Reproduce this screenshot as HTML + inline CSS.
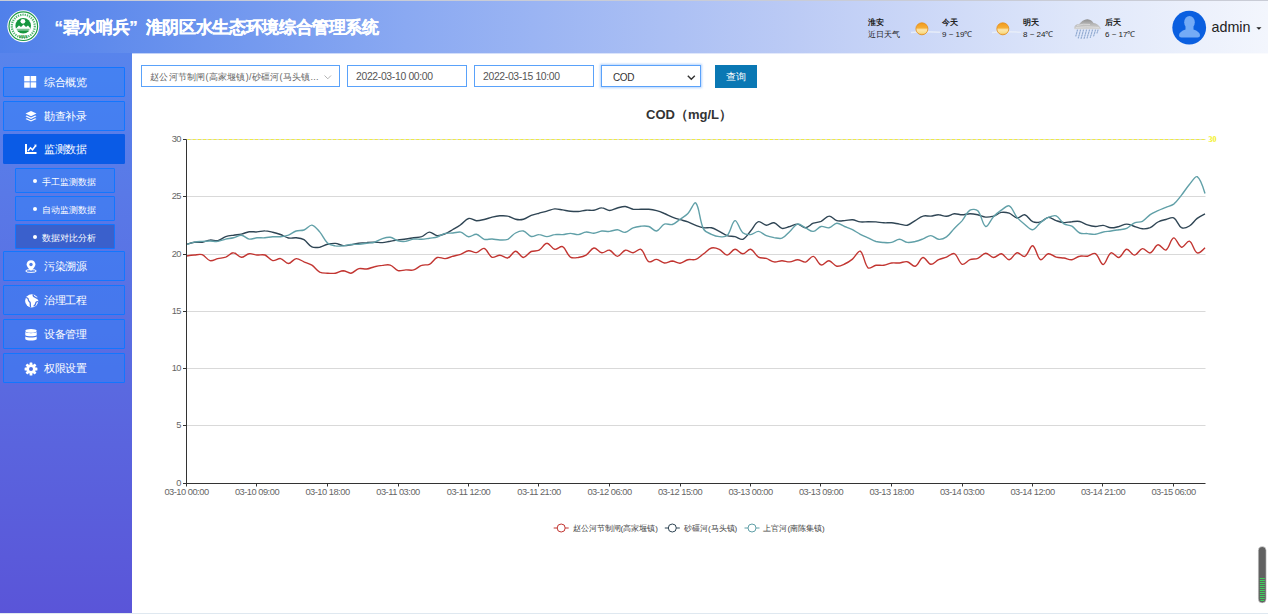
<!DOCTYPE html>
<html><head><meta charset="utf-8">
<style>
*{margin:0;padding:0;box-sizing:border-box}
html,body{width:1268px;height:614px;overflow:hidden;background:#fff;font-family:"Liberation Sans",sans-serif}
#hdr{position:absolute;left:0;top:0;width:1268px;height:54px;background:linear-gradient(90deg,#5080ea 0%,#8aa9f2 32%,#bccbf5 63%,#dfe7fa 85%,#f3f6fd 100%)}
#hdr .topline{position:absolute;left:0;top:0;width:1268px;height:1px;background:#c9ccd6}
#title{position:absolute;left:46px;top:16.5px;color:#fff;font-size:17px;letter-spacing:-0.36px;font-weight:bold;white-space:nowrap;line-height:22px;-webkit-text-stroke:0.25px #fff}
#title b{display:inline-block;width:16.64px;font-weight:bold}
#side{position:absolute;left:0;top:53px;width:132px;height:560px;background:linear-gradient(180deg,#5884ec 0%,#5a6ee2 50%,#5a55d8 100%)}
.mi{position:absolute;left:3px;width:122px;height:30px;border:1px solid #1276ff;border-radius:1px;background:rgba(50,128,248,0.5);color:#fff;font-size:11px}
.mi.act{background:#0a5be6;border-color:#0a5be6}
.mi span{position:absolute;left:40px;top:8px;white-space:nowrap;line-height:12px;letter-spacing:-0.3px}
.mi svg{position:absolute;left:20px;top:8px}
.si{position:absolute;left:15px;width:100px;height:25px;border:1px solid #1276ff;border-radius:1px;background:rgba(50,128,248,0.5);color:#fff;font-size:9.2px}
.si.act{background:#3a60cc}
.si i{position:absolute;left:17px;top:9.5px;width:4px;height:4px;border-radius:50%;background:#fff}
.si span{position:absolute;left:26px;top:7.5px;white-space:nowrap;line-height:10px}
#bline{position:absolute;left:0;top:613px;width:1268px;height:1px;background:#dfe8f0}
.inp{position:absolute;top:65px;height:22px;border:1px solid #5aa2fa;background:#fff;font-size:10.4px;letter-spacing:-0.33px;color:#555;white-space:nowrap;overflow:hidden}
.inp span{position:absolute;left:8px;top:4.5px;line-height:12px}
#btn{position:absolute;left:715px;top:65px;width:42px;height:23px;background:#0a78b4;color:#fff;font-size:9.5px;text-align:center;line-height:23px}
.wt{position:absolute;font-size:8px;color:#222;white-space:nowrap;line-height:10px}
#chart{position:absolute;left:0;top:0}
.ax{font-size:9.3px;letter-spacing:-0.5px;fill:#666;font-family:"Liberation Sans",sans-serif}
</style></head><body>
<div id="hdr"><div class="topline"></div>
<svg style="position:absolute;left:0;top:0" width="60" height="53">
<circle cx="23.3" cy="26.2" r="16" fill="#fff"/>
<circle cx="23.3" cy="26.2" r="14.3" fill="none" stroke="#1e9a45" stroke-width="1.2"/>
<circle cx="23.3" cy="26.2" r="11.5" fill="none" stroke="#4fb56e" stroke-width="2.2" stroke-dasharray="1.3,1"/>
<circle cx="23.2" cy="25.8" r="7.8" fill="#17963f"/>
<circle cx="22.9" cy="21.3" r="2.4" fill="#fff"/>
<path d="M16 28.5 L19 25.5 L21 27 L23.5 24.5 L26 27 L28 25.5 L30.5 28.5 L30 30.5 L16.5 30.5Z" fill="#fff"/>
<path d="M17 29.3 H29.5 M18.5 31 H28" stroke="#17963f" stroke-width="0.7"/>
<text x="23.3" y="38" font-size="4" fill="#1e9a45" text-anchor="middle" font-weight="bold">MEE</text>
</svg>
<div id="title"><b style="text-align:right">“</b>碧水哨兵<b style="text-align:left">”</b>淮阴区水生态环境综合管理系统</div>
<svg style="position:absolute;left:900px;top:10px" width="220" height="34">
<defs>
<linearGradient id="sun" x1="0" y1="0" x2="0" y2="1"><stop offset="0" stop-color="#f29a1c"/><stop offset="0.42" stop-color="#f6ae36"/><stop offset="0.58" stop-color="#fbe6ad"/><stop offset="0.85" stop-color="#f9dc88"/><stop offset="1" stop-color="#f2ad3c"/></linearGradient>
<linearGradient id="cl" x1="0" y1="0" x2="0" y2="1"><stop offset="0" stop-color="#8e8e8e"/><stop offset="0.5" stop-color="#b8b8b8"/><stop offset="1" stop-color="#d6d6d6"/></linearGradient>
</defs>
<path d="M11 22.5 Q25 21 40 22.3" stroke="#e9eef8" stroke-width="1.6" fill="none" opacity="0.9"/>
<circle cx="21.9" cy="18.8" r="6" fill="url(#sun)" stroke="#e38d18" stroke-width="0.8"/>
<path d="M92 22.5 Q106 21 121 22.3" stroke="#e9eef8" stroke-width="1.6" fill="none" opacity="0.9"/>
<circle cx="102.8" cy="18.8" r="6" fill="url(#sun)" stroke="#e38d18" stroke-width="0.8"/>
<path d="M174.3 19 C173.8 16.2 175.8 14.2 179 14.3 C181 11.5 184.5 9 187.5 9.2 C190.5 9.3 192.5 11.5 193.5 13 C196.5 13.2 199.5 15.5 201 18.6 L200.3 19.3 L174.8 19.3Z" fill="url(#cl)"/>
<path d="M177 15.5 Q183 13.5 190 14.5 M176 17.5 Q186 16 199 17.5" stroke="#e6e6e6" stroke-width="0.8" fill="none" opacity="0.8"/>
<g stroke="#86a2cc" stroke-width="1.2" stroke-linecap="round" stroke-dasharray="1.2,1.3" opacity="0.85">
<path d="M177.5 20 l-2 7 M180.5 20 l-2.2 8 M183.5 20 l-2.4 8.5 M186.5 20 l-2.4 8.5 M189.5 20 l-2.4 8 M192.5 20 l-2.2 7.5 M195.5 20 l-2 6.5 M198 20 l-1 3"/>
</g>
</svg>
<div class="wt" style="left:868px;top:17.5px;font-weight:bold">淮安</div>
<div class="wt" style="left:868px;top:29.5px">近日天气</div>
<div class="wt" style="left:942px;top:17.5px;font-weight:bold">今天</div>
<div class="wt" style="left:942px;top:29.5px">9 ~ 19℃</div>
<div class="wt" style="left:1023px;top:17.5px;font-weight:bold">明天</div>
<div class="wt" style="left:1023px;top:29.5px">8 ~ 24℃</div>
<div class="wt" style="left:1105px;top:17.5px;font-weight:bold">后天</div>
<div class="wt" style="left:1105px;top:29.5px">6 ~ 17℃</div>
<svg style="position:absolute;left:1168px;top:6px" width="100" height="44">
<circle cx="21.2" cy="21.6" r="16.9" fill="#0a5fe0"/>
<ellipse cx="21.5" cy="16.3" rx="5.3" ry="6.4" fill="#74abf6"/>
<path d="M17.5 20.5 L17.5 23.5 Q11.5 25.5 11 29 Q11 31.5 13.5 31.5 L29.5 31.5 Q32 31.5 32 29 Q31.5 25.5 25.5 23.5 L25.5 20.5Z" fill="#74abf6"/>
<path d="M88.3 21.3 L93.5 21.3 L90.9 23.8Z" fill="#222"/>
</svg>
<div style="position:absolute;left:1211.5px;top:18.5px;font-size:14.3px;color:#222;line-height:17px">admin</div>
</div>
<div id="side">
</div>
<div class="mi" style="top:67px"><svg width="13" height="13" viewBox="0 0 13 13" style="left:20px;top:8px"><rect x="0.2" y="0" width="5.6" height="5.4" fill="#fff"/><rect x="6.6" y="0" width="5.6" height="5.4" fill="#fff"/><rect x="0.2" y="6.3" width="5.6" height="5.4" fill="#fff"/><rect x="6.6" y="6.3" width="5.6" height="5.4" fill="#fff"/></svg><span>综合概览</span></div>
<div class="mi" style="top:101px"><svg width="13" height="13" viewBox="0 0 13 13" style="left:20.5px;top:8.5px"><path d="M6 0 L11.5 2.6 L6 5.2 L0.5 2.6Z" fill="#fff"/><path d="M1.8 4.6 L6 6.6 L10.2 4.6 L11.5 5.3 L6 7.9 L0.5 5.3Z" fill="#fff"/><path d="M1.8 7.3 L6 9.3 L10.2 7.3 L11.5 8 L6 10.6 L0.5 8Z" fill="#fff"/></svg><span>勘查补录</span></div>
<div class="mi act" style="top:134px"><svg width="13" height="13" viewBox="0 0 13 13" style="left:20.5px;top:9px"><path d="M1 0 V9 H11.5" stroke="#fff" stroke-width="2" fill="none"/><path d="M3 7 L5.5 3.8 L7.5 5.8 L10.8 1.5" stroke="#fff" stroke-width="1.5" fill="none"/><path d="M9 0.8 L11.5 0.5 L11.2 3Z" fill="#fff"/></svg><span>监测数据</span></div>
<div class="si" style="top:168px"><i></i><span>手工监测数据</span></div>
<div class="si" style="top:196px"><i></i><span>自动监测数据</span></div>
<div class="si act" style="top:224px"><i></i><span>数据对比分析</span></div>
<div class="mi" style="top:251px"><svg width="13" height="14" viewBox="0 0 13 14" style="left:20.5px;top:8px"><path d="M6 0.3 C3.2 0.3 1.6 2.3 1.6 4.6 C1.6 7.2 6 11 6 11 C6 11 10.4 7.2 10.4 4.6 C10.4 2.3 8.8 0.3 6 0.3Z" fill="#fff"/><circle cx="6" cy="4.5" r="1.7" fill="#4f7ee9"/><ellipse cx="6" cy="11" rx="5.3" ry="1.4" fill="none" stroke="#fff" stroke-width="1"/></svg><span>污染溯源</span></div>
<div class="mi" style="top:285px"><svg width="14" height="14" viewBox="0 0 14 14" style="left:20.5px;top:7.5px"><circle cx="6.7" cy="6.8" r="6.6" fill="#fff"/><path d="M1.2 3.4 C2.6 4 3.6 4.6 3.4 5.8 C3.2 7 4.8 7.6 5.2 8.8 C5.5 10 5 11.5 5.6 12.9 M8.2 0.5 C8 1.8 8.8 2.8 10 3.2 C11.2 3.6 12.4 3.9 12.9 5.2 M12.9 7.6 C11.6 7.4 10.8 8.2 10.7 9.4 C10.6 10.6 9.8 11.6 8.6 12.3" stroke="#4a74e6" stroke-width="1.3" fill="none"/></svg><span>治理工程</span></div>
<div class="mi" style="top:319px"><svg width="13" height="13" viewBox="0 0 13 13" style="left:20.5px;top:8.5px"><ellipse cx="6" cy="1.9" rx="5.7" ry="1.9" fill="#fff"/><path d="M0.3 3.1 C1.5 4.6 10.5 4.6 11.7 3.1 V6.2 C10.5 7.7 1.5 7.7 0.3 6.2Z" fill="#fff"/><path d="M0.3 7.4 C1.5 8.9 10.5 8.9 11.7 7.4 V10.2 C10.5 12 1.5 12 0.3 10.2Z" fill="#fff"/></svg><span>设备管理</span></div>
<div class="mi" style="top:352.5px"><svg width="14" height="14" viewBox="-7 -7 14 14" style="left:20px;top:8px"><g fill="#fff"><circle r="4.6"/><rect x="-1.4" y="-6.4" width="2.8" height="3" rx="0.5" transform="rotate(0)"/><rect x="-1.4" y="-6.4" width="2.8" height="3" rx="0.5" transform="rotate(45)"/><rect x="-1.4" y="-6.4" width="2.8" height="3" rx="0.5" transform="rotate(90)"/><rect x="-1.4" y="-6.4" width="2.8" height="3" rx="0.5" transform="rotate(135)"/><rect x="-1.4" y="-6.4" width="2.8" height="3" rx="0.5" transform="rotate(180)"/><rect x="-1.4" y="-6.4" width="2.8" height="3" rx="0.5" transform="rotate(225)"/><rect x="-1.4" y="-6.4" width="2.8" height="3" rx="0.5" transform="rotate(270)"/><rect x="-1.4" y="-6.4" width="2.8" height="3" rx="0.5" transform="rotate(315)"/></g><circle r="2" fill="#4f72e4"/></svg><span>权限设置</span></div>
<div id="bline"></div>
<div style="position:absolute;left:132px;top:53px;width:1136px;height:1px;background:rgba(255,255,255,0.6)"></div>

<div class="inp" style="left:141px;width:199px"><span style="font-size:9px;letter-spacing:0.25px;color:#666">赵公河节制闸(高家堰镇)/砂礓河(马头镇...</span><svg style="position:absolute;left:182px;top:8.5px" width="8" height="5"><path d="M0.5 0.5 L3.8 3.8 L7 0.5" stroke="#aaa" stroke-width="0.9" fill="none"/></svg></div>
<div class="inp" style="left:347px;width:120px"><span>2022-03-10 00:00</span></div>
<div class="inp" style="left:474px;width:120px"><span>2022-03-15 10:00</span></div>
<div class="inp" style="left:601px;width:100px;box-shadow:0 0 2px 1px rgba(90,160,250,0.45)"><span style="left:11px;top:5.5px;font-size:10px;letter-spacing:-0.4px;color:#333">COD</span><svg style="position:absolute;left:85px;top:8.5px" width="9" height="6"><path d="M0.8 0.8 L4.3 4.3 L7.8 0.8" stroke="#333" stroke-width="1.4" fill="none"/></svg></div>
<div id="btn">查询</div>

<svg id="chart" width="1268" height="614">
<line x1="186.5" y1="425.5" x2="1205.5" y2="425.5" stroke="#d9d9d9" stroke-width="1"/>
<line x1="186.5" y1="368.5" x2="1205.5" y2="368.5" stroke="#d9d9d9" stroke-width="1"/>
<line x1="186.5" y1="311.5" x2="1205.5" y2="311.5" stroke="#d9d9d9" stroke-width="1"/>
<line x1="186.5" y1="254.5" x2="1205.5" y2="254.5" stroke="#d9d9d9" stroke-width="1"/>
<line x1="186.5" y1="196.5" x2="1205.5" y2="196.5" stroke="#d9d9d9" stroke-width="1"/>
<line x1="186.5" y1="139.5" x2="1205.5" y2="139.5" stroke="#d9d9d9" stroke-width="1"/>
<line x1="187.5" y1="139.5" x2="1205.5" y2="139.5" stroke="#eeeb40" stroke-width="1" stroke-dasharray="3,2.2"/>
<text x="1208.5" y="142" font-size="8" font-weight="bold" fill="#f3f020" font-family="Liberation Serif">30</text>
<path d="M186.5 256.0 C186.5 256.0 191.6 255.2 194.3 255.0 C197.1 254.8 199.7 253.9 202.2 254.7 C205.2 255.8 207.0 259.8 210.0 260.6 C212.5 261.2 215.1 259.3 217.8 258.6 C220.6 258.0 223.1 258.0 225.7 257.1 C228.6 256.0 230.8 252.7 233.5 252.8 C236.3 252.8 238.5 257.2 241.3 257.3 C244.0 257.5 246.3 254.1 249.2 253.7 C251.8 253.3 254.3 254.8 257.0 255.0 C259.7 255.2 262.4 254.1 264.9 255.0 C267.9 256.1 269.7 259.9 272.7 260.6 C275.2 261.2 278.0 258.2 280.5 258.6 C283.4 259.2 285.6 263.5 288.4 263.5 C291.1 263.5 293.3 258.9 296.2 258.6 C298.8 258.4 301.3 260.7 304.0 261.9 C306.8 263.0 309.4 263.6 311.9 265.1 C314.9 267.1 316.6 270.4 319.7 272.1 C322.1 273.3 324.8 273.0 327.5 273.2 C330.3 273.4 332.7 273.6 335.4 273.2 C338.2 272.8 340.5 270.8 343.2 270.7 C345.9 270.7 348.4 273.5 351.0 273.2 C353.9 272.8 355.9 269.4 358.9 268.6 C361.4 267.9 364.0 269.3 366.7 269.0 C369.5 268.7 371.8 267.3 374.5 266.7 C377.2 266.0 379.6 265.6 382.4 265.4 C385.1 265.1 387.7 264.3 390.2 265.1 C393.2 266.1 395.0 269.6 398.0 270.6 C400.5 271.3 403.1 270.0 405.9 269.9 C408.6 269.8 411.2 270.7 413.7 269.9 C416.7 269.1 418.6 266.4 421.6 265.4 C424.1 264.4 427.0 265.5 429.4 264.3 C432.5 262.8 434.1 258.7 437.2 257.5 C439.6 256.7 442.4 258.8 445.1 258.6 C447.8 258.4 450.1 257.0 452.9 256.2 C455.6 255.5 458.1 255.2 460.7 254.3 C463.6 253.3 465.7 251.1 468.6 250.8 C471.2 250.5 473.8 253.0 476.4 252.6 C479.3 252.2 481.9 247.7 484.2 248.4 C487.4 249.4 488.8 255.9 492.1 257.3 C494.3 258.2 497.2 255.1 499.9 255.2 C502.7 255.3 505.3 258.6 507.7 258.0 C510.8 257.2 512.8 251.3 515.6 251.2 C518.3 251.1 520.6 257.4 523.4 257.5 C526.1 257.5 528.2 252.9 531.2 251.5 C533.7 250.4 536.7 251.5 539.1 250.2 C542.2 248.5 544.1 243.3 546.9 243.2 C549.6 243.0 551.7 248.6 554.7 249.3 C557.2 249.8 560.5 245.6 562.6 246.7 C565.9 248.4 567.0 254.7 570.4 257.1 C572.5 258.5 575.6 257.8 578.2 257.5 C581.0 257.1 583.7 256.6 586.1 255.1 C589.2 253.3 591.0 248.4 593.9 248.0 C596.5 247.6 598.9 252.4 601.8 252.8 C604.3 253.2 607.1 249.6 609.6 250.2 C612.6 250.9 614.7 256.4 617.4 256.4 C620.2 256.4 622.3 250.9 625.3 250.2 C627.7 249.6 630.4 253.0 633.1 252.8 C635.9 252.6 638.9 248.1 640.9 249.3 C644.4 251.2 645.2 259.4 648.8 261.7 C650.7 262.9 653.9 259.2 656.6 259.4 C659.4 259.7 661.6 262.7 664.4 263.0 C667.1 263.2 669.5 261.0 672.3 261.0 C675.0 261.1 677.4 263.4 680.1 263.2 C682.9 263.0 685.1 260.4 687.9 259.7 C690.6 259.1 693.3 260.4 695.8 259.4 C698.8 258.3 700.9 255.8 703.6 253.8 C706.4 251.8 708.4 248.9 711.4 248.0 C713.9 247.3 716.8 248.2 719.3 249.3 C722.3 250.7 724.4 255.1 727.1 255.1 C729.9 255.1 732.1 249.5 735.0 249.3 C737.6 249.1 740.0 253.8 742.8 253.8 C745.5 253.8 748.2 248.8 750.6 249.3 C753.6 249.9 755.3 255.2 758.5 257.1 C760.7 258.4 763.7 257.6 766.3 258.4 C769.1 259.3 771.3 261.5 774.1 261.9 C776.8 262.3 779.2 260.7 782.0 260.7 C784.7 260.7 787.1 262.1 789.8 261.9 C792.6 261.7 794.9 259.7 797.6 259.7 C800.4 259.7 802.9 262.6 805.5 262.1 C808.4 261.4 810.8 256.0 813.3 256.4 C816.3 257.0 818.0 264.1 821.1 264.9 C823.5 265.6 826.3 260.5 829.0 260.7 C831.8 261.0 833.8 265.6 836.8 266.2 C839.3 266.7 842.1 265.2 844.6 264.0 C847.6 262.7 850.0 261.1 852.5 259.1 C855.5 256.6 858.3 250.1 860.3 251.2 C863.7 253.2 864.4 264.5 868.1 267.9 C869.8 269.4 873.2 265.8 876.0 265.3 C878.7 264.9 881.1 265.7 883.8 265.3 C886.6 264.9 888.8 263.4 891.6 263.0 C894.3 262.6 896.8 263.2 899.5 263.0 C902.2 262.7 904.8 261.1 907.3 261.7 C910.2 262.3 912.8 266.9 915.2 266.2 C918.2 265.4 920.1 257.9 923.0 257.5 C925.6 257.2 927.9 263.9 930.8 264.3 C933.4 264.6 935.8 261.0 938.7 259.7 C941.3 258.5 943.8 258.2 946.5 257.1 C949.3 256.0 952.2 252.6 954.3 253.6 C957.7 255.1 958.9 263.0 962.2 264.3 C964.4 265.1 967.1 260.8 970.0 259.7 C972.6 258.7 975.3 259.4 977.8 258.4 C980.8 257.2 982.9 253.4 985.7 253.2 C988.3 253.0 990.7 257.4 993.5 257.5 C996.2 257.6 998.8 253.5 1001.3 253.8 C1004.3 254.3 1006.5 259.9 1009.2 259.7 C1012.0 259.5 1014.0 253.4 1017.0 252.8 C1019.5 252.3 1022.7 257.4 1024.8 256.4 C1028.2 255.0 1030.2 245.2 1032.7 245.8 C1035.7 246.4 1037.1 258.0 1040.5 259.7 C1042.6 260.8 1045.4 254.3 1048.3 253.8 C1050.9 253.4 1053.3 256.3 1056.2 257.1 C1058.8 257.8 1061.3 257.6 1064.0 258.0 C1066.8 258.5 1069.2 260.0 1071.9 259.7 C1074.7 259.4 1076.8 256.8 1079.7 256.2 C1082.3 255.6 1084.9 256.6 1087.5 256.2 C1090.3 255.7 1093.3 252.5 1095.4 253.6 C1098.8 255.4 1100.5 264.7 1103.2 264.5 C1106.0 264.4 1107.7 254.3 1111.0 252.8 C1113.2 251.8 1116.4 258.0 1118.9 257.5 C1121.9 256.8 1123.8 249.7 1126.7 249.3 C1129.2 248.9 1131.8 255.3 1134.5 255.1 C1137.3 255.0 1139.4 249.1 1142.4 248.6 C1144.9 248.3 1147.8 253.5 1150.2 252.9 C1153.3 252.1 1155.0 245.3 1158.0 244.8 C1160.5 244.3 1163.7 250.9 1165.9 250.0 C1169.2 248.5 1170.7 238.4 1173.7 237.9 C1176.2 237.5 1178.5 246.6 1181.5 247.2 C1184.0 247.7 1187.1 240.4 1189.4 241.2 C1192.6 242.3 1193.9 251.5 1197.2 252.9 C1199.4 253.8 1205.0 247.7 1205.0 247.7" fill="none" stroke="#c23531" stroke-width="1.4" stroke-linejoin="round"/>
<path d="M186.5 244.3 C186.5 244.3 191.6 242.7 194.3 242.3 C197.0 242.0 199.5 242.7 202.2 242.3 C205.0 242.0 207.2 240.4 210.0 240.1 C212.7 239.8 215.2 241.2 217.8 240.7 C220.7 240.0 222.8 237.7 225.7 236.7 C228.3 235.8 230.8 235.6 233.5 235.2 C236.2 234.7 238.6 234.7 241.3 234.1 C244.1 233.5 246.4 232.2 249.2 231.8 C251.9 231.4 254.3 232.1 257.0 231.9 C259.8 231.8 262.1 230.8 264.9 230.9 C267.6 230.9 270.0 231.6 272.7 232.2 C275.5 232.8 277.8 233.5 280.5 234.5 C283.3 235.6 285.5 237.4 288.4 238.0 C291.0 238.6 293.5 237.5 296.2 237.8 C299.0 238.1 301.7 238.4 304.0 239.7 C307.1 241.6 308.7 245.4 311.9 246.9 C314.2 248.0 317.0 247.6 319.7 247.2 C322.5 246.7 324.7 245.0 327.5 244.3 C330.2 243.7 332.7 243.2 335.4 243.4 C338.2 243.6 340.4 245.3 343.2 245.6 C345.9 245.9 348.3 245.3 351.0 244.9 C353.8 244.5 356.1 243.6 358.9 243.2 C361.6 242.8 364.0 242.7 366.7 242.6 C369.4 242.4 371.8 242.2 374.5 242.2 C377.3 242.2 379.6 242.7 382.4 242.6 C385.1 242.4 387.5 241.7 390.2 241.3 C393.0 240.8 395.3 240.3 398.0 240.0 C400.8 239.6 403.1 239.4 405.9 239.0 C408.6 238.7 411.0 238.1 413.7 237.7 C416.5 237.3 419.0 237.6 421.6 236.7 C424.5 235.6 426.6 232.3 429.4 232.1 C432.1 232.0 434.4 235.3 437.2 235.7 C439.9 235.9 442.5 234.8 445.1 233.8 C447.9 232.7 450.2 231.1 452.9 229.5 C455.7 227.9 458.1 226.6 460.7 224.7 C463.6 222.7 465.5 219.2 468.6 218.5 C471.0 217.8 473.6 220.5 476.4 220.7 C479.1 220.8 481.5 220.1 484.2 219.5 C487.0 218.9 489.3 217.8 492.1 217.1 C494.8 216.5 497.1 216.0 499.9 215.8 C502.6 215.7 505.1 215.5 507.7 216.1 C510.6 216.7 512.7 218.7 515.6 219.3 C518.2 219.9 520.8 220.0 523.4 219.3 C526.3 218.6 528.4 216.5 531.2 215.4 C533.9 214.4 536.3 213.9 539.1 213.2 C541.8 212.4 544.2 211.9 546.9 211.1 C549.7 210.4 552.0 209.1 554.7 208.9 C557.4 208.7 559.8 209.5 562.6 209.9 C565.3 210.3 567.7 211.0 570.4 211.2 C573.1 211.5 575.5 211.7 578.2 211.5 C581.0 211.3 583.3 210.4 586.1 210.2 C588.8 210.0 591.2 210.6 593.9 210.2 C596.7 209.8 599.0 207.8 601.8 207.9 C604.5 207.9 606.8 210.4 609.6 210.5 C612.3 210.5 614.6 208.7 617.4 208.0 C620.1 207.3 622.6 206.3 625.3 206.5 C628.1 206.8 630.3 208.7 633.1 209.2 C635.8 209.6 638.2 209.3 640.9 209.3 C643.7 209.3 646.0 209.1 648.8 209.3 C651.5 209.5 653.9 209.9 656.6 210.6 C659.4 211.3 661.7 212.3 664.4 213.5 C667.2 214.6 669.5 216.0 672.3 217.1 C674.9 218.2 677.3 218.9 680.1 219.7 C682.8 220.5 685.3 220.9 687.9 221.9 C690.8 223.0 693.0 224.4 695.8 225.4 C698.5 226.4 700.8 227.4 703.6 227.8 C706.3 228.2 708.8 227.2 711.4 227.8 C714.3 228.5 716.6 230.1 719.3 231.4 C722.1 232.8 724.2 234.6 727.1 235.6 C729.7 236.5 732.3 236.0 735.0 236.6 C737.8 237.3 740.5 240.1 742.8 239.3 C746.0 238.1 748.0 234.0 750.6 231.0 C753.5 227.8 755.2 222.9 758.5 221.7 C760.7 220.8 763.5 225.0 766.3 225.2 C769.0 225.4 771.6 222.3 774.1 222.8 C777.1 223.5 779.0 227.7 782.0 228.4 C784.5 229.0 787.1 227.2 789.8 226.5 C792.6 225.7 795.0 223.9 797.6 224.1 C800.4 224.4 802.8 227.9 805.5 227.8 C808.3 227.6 810.4 224.4 813.3 223.2 C815.9 222.2 818.6 222.4 821.1 221.3 C824.1 219.9 826.2 216.2 829.0 216.1 C831.7 215.9 833.9 219.8 836.8 220.6 C839.3 221.4 841.9 220.8 844.6 220.6 C847.4 220.5 849.8 219.5 852.5 219.7 C855.3 219.9 857.5 221.6 860.3 221.9 C863.0 222.3 865.4 221.7 868.1 221.7 C870.9 221.7 873.2 221.7 876.0 221.9 C878.7 222.1 881.1 222.7 883.8 222.8 C886.5 223.0 888.9 222.6 891.6 222.8 C894.4 223.1 896.7 223.7 899.5 224.1 C902.2 224.5 904.8 225.8 907.3 225.2 C910.2 224.5 912.4 222.2 915.2 220.6 C917.9 219.0 920.0 216.9 923.0 216.1 C925.5 215.3 928.1 216.3 930.8 216.1 C933.6 215.8 935.9 214.7 938.7 214.8 C941.4 214.8 943.8 216.5 946.5 216.3 C949.3 216.2 951.5 214.1 954.3 213.8 C957.0 213.6 959.4 214.8 962.2 214.8 C964.9 214.7 967.3 213.7 970.0 213.7 C972.7 213.7 975.1 214.2 977.8 214.8 C980.6 215.4 982.9 216.9 985.7 217.1 C988.4 217.3 990.9 216.8 993.5 216.1 C996.4 215.2 998.5 212.9 1001.3 212.4 C1004.0 211.9 1006.6 212.3 1009.2 213.2 C1012.1 214.2 1014.2 217.7 1017.0 218.0 C1019.6 218.3 1022.4 214.2 1024.8 214.8 C1027.9 215.5 1029.5 220.2 1032.7 221.7 C1035.0 222.7 1038.0 222.6 1040.5 221.9 C1043.5 221.1 1045.5 217.6 1048.3 217.4 C1051.0 217.1 1053.4 219.7 1056.2 220.6 C1058.9 221.5 1061.2 222.4 1064.0 222.6 C1066.7 222.8 1069.1 221.8 1071.9 221.7 C1074.6 221.5 1077.1 221.0 1079.7 221.5 C1082.5 222.1 1084.7 224.0 1087.5 224.9 C1090.2 225.8 1092.6 226.4 1095.4 226.5 C1098.1 226.6 1100.5 225.2 1103.2 225.4 C1106.0 225.7 1108.2 227.6 1111.0 227.8 C1113.7 228.0 1116.2 227.1 1118.9 226.5 C1121.6 225.8 1124.0 224.1 1126.7 224.1 C1129.4 224.1 1131.8 225.7 1134.5 226.5 C1137.3 227.3 1139.6 228.6 1142.4 228.8 C1145.1 229.0 1147.7 228.7 1150.2 227.7 C1153.2 226.3 1155.1 223.5 1158.0 222.0 C1160.6 220.7 1163.1 220.2 1165.9 219.5 C1168.6 218.8 1171.6 216.8 1173.7 217.9 C1177.1 219.6 1178.2 225.9 1181.5 227.7 C1183.7 228.8 1187.1 227.4 1189.4 226.0 C1192.5 224.2 1194.2 220.7 1197.2 218.4 C1199.7 216.5 1205.0 213.8 1205.0 213.8" fill="none" stroke="#2f4554" stroke-width="1.4" stroke-linejoin="round"/>
<path d="M186.5 244.6 C186.5 244.6 191.5 242.6 194.3 242.1 C197.0 241.5 199.4 241.6 202.2 241.4 C204.9 241.3 207.3 241.0 210.0 241.0 C212.7 241.0 215.2 241.8 217.8 241.4 C220.6 241.1 222.9 239.7 225.7 239.1 C228.4 238.5 230.8 238.5 233.5 237.8 C236.3 237.1 238.7 235.0 241.3 235.2 C244.2 235.4 246.3 238.6 249.2 239.1 C251.8 239.5 254.3 238.0 257.0 237.8 C259.7 237.6 262.1 238.0 264.9 237.8 C267.6 237.6 269.9 236.9 272.7 236.7 C275.4 236.6 277.8 237.0 280.5 236.7 C283.3 236.5 285.8 236.1 288.4 235.2 C291.2 234.1 293.3 232.0 296.2 231.0 C298.8 230.2 301.5 230.9 304.0 230.0 C307.0 228.9 309.3 224.8 311.9 225.1 C314.8 225.5 317.3 229.2 319.7 231.9 C322.8 235.5 324.1 240.0 327.5 243.0 C329.6 244.9 332.5 245.3 335.4 245.9 C338.0 246.3 340.5 246.1 343.2 245.9 C346.0 245.6 348.3 244.8 351.0 244.5 C353.8 244.2 356.1 244.5 358.9 244.3 C361.6 244.0 364.0 243.6 366.7 243.2 C369.4 242.8 371.9 242.9 374.5 242.2 C377.4 241.3 379.5 239.5 382.4 238.6 C385.0 237.8 387.6 237.0 390.2 237.3 C393.1 237.7 395.2 240.1 398.0 240.9 C400.7 241.5 403.2 241.6 405.9 241.3 C408.7 240.9 410.9 239.4 413.7 239.0 C416.4 238.7 418.8 239.4 421.6 239.3 C424.3 239.2 426.6 238.7 429.4 238.3 C432.1 237.8 434.6 237.8 437.2 237.0 C440.1 236.1 442.2 234.2 445.1 233.4 C447.7 232.8 450.2 233.3 452.9 233.0 C455.6 232.8 458.2 231.5 460.7 232.1 C463.7 232.8 465.7 236.3 468.6 236.7 C471.2 237.1 473.8 233.9 476.4 234.3 C479.3 234.8 481.3 238.4 484.2 239.3 C486.7 240.1 489.3 238.9 492.1 239.0 C494.8 239.2 497.2 239.9 499.9 240.0 C502.6 240.0 505.3 240.3 507.7 239.3 C510.8 237.9 512.5 234.6 515.6 233.0 C518.0 231.7 520.9 230.5 523.4 231.0 C526.4 231.7 528.3 235.8 531.2 236.5 C533.8 237.1 536.3 234.5 539.1 234.6 C541.8 234.6 544.2 236.6 546.9 236.6 C549.7 236.6 552.0 234.9 554.7 234.6 C557.4 234.2 559.9 234.8 562.6 234.6 C565.3 234.4 567.7 233.4 570.4 233.4 C573.2 233.4 575.6 234.8 578.2 234.6 C581.0 234.3 583.3 232.2 586.1 232.0 C588.8 231.7 591.2 233.4 593.9 233.3 C596.7 233.1 599.0 231.4 601.8 231.0 C604.4 230.7 606.9 231.7 609.6 231.4 C612.4 231.2 614.7 229.6 617.4 229.7 C620.2 229.9 622.6 232.7 625.3 232.3 C628.1 232.0 630.2 228.9 633.1 227.8 C635.7 226.8 638.2 226.5 640.9 226.2 C643.6 226.0 646.2 225.7 648.8 226.5 C651.7 227.4 654.1 231.4 656.6 231.0 C659.5 230.6 661.3 225.4 664.4 224.1 C666.8 223.2 669.8 225.3 672.3 224.5 C675.3 223.6 677.4 221.2 680.1 219.3 C682.9 217.3 685.6 215.9 687.9 213.5 C691.1 210.2 694.0 201.3 695.8 203.0 C699.5 206.7 699.5 221.0 703.6 229.1 C705.0 231.9 708.5 232.9 711.4 234.3 C714.0 235.5 716.5 236.4 719.3 236.6 C722.0 236.9 725.4 237.4 727.1 235.6 C730.9 231.8 732.0 221.2 735.0 220.6 C737.5 220.2 739.3 229.6 742.8 232.7 C744.7 234.5 747.9 234.8 750.6 234.6 C753.4 234.3 755.8 231.3 758.5 231.4 C761.3 231.6 763.4 234.5 766.3 235.6 C768.9 236.6 771.3 237.1 774.1 237.6 C776.8 238.0 779.6 239.1 782.0 238.2 C785.1 237.0 787.1 233.9 789.8 231.4 C792.6 228.9 794.6 224.8 797.6 224.1 C800.1 223.6 802.7 226.5 805.5 227.8 C808.2 229.1 810.7 231.7 813.3 231.4 C816.1 231.2 818.2 227.2 821.1 226.5 C823.7 225.9 826.4 228.3 829.0 227.8 C831.9 227.2 834.0 223.5 836.8 223.2 C839.5 223.0 841.9 225.3 844.6 226.5 C847.4 227.6 849.8 228.4 852.5 229.7 C855.3 231.2 857.5 232.8 860.3 234.3 C863.0 235.7 865.4 236.7 868.1 237.9 C870.9 239.2 873.1 240.6 876.0 241.5 C878.6 242.2 881.1 242.3 883.8 242.5 C886.5 242.7 889.0 242.9 891.6 242.4 C894.5 241.8 896.7 239.3 899.5 239.3 C902.2 239.3 904.5 242.0 907.3 242.4 C910.0 242.8 912.5 242.1 915.2 241.5 C918.0 240.8 920.3 239.9 923.0 238.9 C925.8 237.8 928.1 235.5 930.8 235.6 C933.6 235.7 935.8 239.0 938.7 239.3 C941.3 239.5 944.2 238.5 946.5 236.9 C949.7 234.7 951.5 231.3 954.3 228.4 C957.0 225.6 959.6 223.5 962.2 220.6 C965.1 217.2 966.6 212.3 970.0 210.2 C972.1 208.9 976.1 209.1 977.8 210.8 C981.6 214.8 982.5 225.3 985.7 226.5 C988.0 227.3 990.5 219.9 993.5 216.7 C996.0 214.2 998.4 212.2 1001.3 210.2 C1003.9 208.4 1007.0 204.9 1009.2 205.9 C1012.5 207.4 1013.9 213.7 1017.0 217.4 C1019.4 220.2 1021.9 222.2 1024.8 224.5 C1027.4 226.6 1030.1 230.1 1032.7 229.7 C1035.6 229.4 1037.6 224.9 1040.5 222.6 C1043.1 220.5 1045.4 218.6 1048.3 217.4 C1050.9 216.3 1053.9 214.9 1056.2 215.8 C1059.4 217.1 1060.8 221.8 1064.0 223.9 C1066.3 225.4 1069.4 224.8 1071.9 226.2 C1074.9 228.0 1076.6 231.5 1079.7 233.0 C1082.1 234.1 1084.8 233.4 1087.5 233.6 C1090.3 233.9 1092.7 234.6 1095.4 234.3 C1098.2 234.0 1100.4 232.5 1103.2 232.0 C1105.9 231.4 1108.3 231.4 1111.0 231.0 C1113.8 230.7 1116.1 230.2 1118.9 229.7 C1121.6 229.3 1124.2 229.5 1126.7 228.4 C1129.7 227.1 1131.5 224.2 1134.5 222.8 C1137.0 221.7 1140.0 222.5 1142.4 221.3 C1145.5 219.7 1147.3 216.7 1150.2 214.6 C1152.7 212.9 1155.2 211.9 1158.0 210.6 C1160.7 209.3 1163.1 208.5 1165.9 207.3 C1168.6 206.2 1171.4 205.8 1173.7 204.1 C1176.9 201.6 1178.9 198.4 1181.5 195.1 C1184.4 191.5 1186.4 188.0 1189.4 184.5 C1191.9 181.6 1195.2 175.5 1197.2 176.7 C1200.6 178.7 1205.0 193.5 1205.0 193.5" fill="none" stroke="#61a0a8" stroke-width="1.4" stroke-linejoin="round"/>

<line x1="186.5" y1="139.5" x2="186.5" y2="483.5" stroke="#333" stroke-width="1"/>
<line x1="183" y1="483.5" x2="1205.5" y2="483.5" stroke="#333" stroke-width="1"/>
<line x1="183" y1="483.5" x2="186.5" y2="483.5" stroke="#333" stroke-width="1"/>
<text x="181" y="486.0" class="ax" text-anchor="end">0</text>
<line x1="183" y1="425.5" x2="186.5" y2="425.5" stroke="#333" stroke-width="1"/>
<text x="181" y="428.0" class="ax" text-anchor="end">5</text>
<line x1="183" y1="368.5" x2="186.5" y2="368.5" stroke="#333" stroke-width="1"/>
<text x="181" y="371.0" class="ax" text-anchor="end">10</text>
<line x1="183" y1="311.5" x2="186.5" y2="311.5" stroke="#333" stroke-width="1"/>
<text x="181" y="314.0" class="ax" text-anchor="end">15</text>
<line x1="183" y1="254.5" x2="186.5" y2="254.5" stroke="#333" stroke-width="1"/>
<text x="181" y="257.0" class="ax" text-anchor="end">20</text>
<line x1="183" y1="196.5" x2="186.5" y2="196.5" stroke="#333" stroke-width="1"/>
<text x="181" y="199.0" class="ax" text-anchor="end">25</text>
<line x1="183" y1="139.5" x2="186.5" y2="139.5" stroke="#333" stroke-width="1"/>
<text x="181" y="142.0" class="ax" text-anchor="end">30</text>
<line x1="186.5" y1="483.5" x2="186.5" y2="486.5" stroke="#333" stroke-width="1"/>
<text x="186.5" y="494.5" class="ax" text-anchor="middle">03-10 00:00</text>
<line x1="256.5" y1="483.5" x2="256.5" y2="486.5" stroke="#333" stroke-width="1"/>
<text x="257.0" y="494.5" class="ax" text-anchor="middle">03-10 09:00</text>
<line x1="327.5" y1="483.5" x2="327.5" y2="486.5" stroke="#333" stroke-width="1"/>
<text x="327.5" y="494.5" class="ax" text-anchor="middle">03-10 18:00</text>
<line x1="398.5" y1="483.5" x2="398.5" y2="486.5" stroke="#333" stroke-width="1"/>
<text x="398.0" y="494.5" class="ax" text-anchor="middle">03-11 03:00</text>
<line x1="468.5" y1="483.5" x2="468.5" y2="486.5" stroke="#333" stroke-width="1"/>
<text x="468.5" y="494.5" class="ax" text-anchor="middle">03-11 12:00</text>
<line x1="538.5" y1="483.5" x2="538.5" y2="486.5" stroke="#333" stroke-width="1"/>
<text x="539.0" y="494.5" class="ax" text-anchor="middle">03-11 21:00</text>
<line x1="609.5" y1="483.5" x2="609.5" y2="486.5" stroke="#333" stroke-width="1"/>
<text x="609.5" y="494.5" class="ax" text-anchor="middle">03-12 06:00</text>
<line x1="680.5" y1="483.5" x2="680.5" y2="486.5" stroke="#333" stroke-width="1"/>
<text x="680.0" y="494.5" class="ax" text-anchor="middle">03-12 15:00</text>
<line x1="750.5" y1="483.5" x2="750.5" y2="486.5" stroke="#333" stroke-width="1"/>
<text x="750.5" y="494.5" class="ax" text-anchor="middle">03-13 00:00</text>
<line x1="820.5" y1="483.5" x2="820.5" y2="486.5" stroke="#333" stroke-width="1"/>
<text x="821.0" y="494.5" class="ax" text-anchor="middle">03-13 09:00</text>
<line x1="891.5" y1="483.5" x2="891.5" y2="486.5" stroke="#333" stroke-width="1"/>
<text x="891.5" y="494.5" class="ax" text-anchor="middle">03-13 18:00</text>
<line x1="962.5" y1="483.5" x2="962.5" y2="486.5" stroke="#333" stroke-width="1"/>
<text x="962.0" y="494.5" class="ax" text-anchor="middle">03-14 03:00</text>
<line x1="1032.5" y1="483.5" x2="1032.5" y2="486.5" stroke="#333" stroke-width="1"/>
<text x="1032.5" y="494.5" class="ax" text-anchor="middle">03-14 12:00</text>
<line x1="1102.5" y1="483.5" x2="1102.5" y2="486.5" stroke="#333" stroke-width="1"/>
<text x="1103.0" y="494.5" class="ax" text-anchor="middle">03-14 21:00</text>
<line x1="1173.5" y1="483.5" x2="1173.5" y2="486.5" stroke="#333" stroke-width="1"/>
<text x="1173.5" y="494.5" class="ax" text-anchor="middle">03-15 06:00</text>
<text x="689" y="118.8" font-size="13" font-weight="bold" fill="#333" text-anchor="middle" font-family="Liberation Sans">COD（mg/L）</text>
<line x1="553.7" y1="528" x2="568.7" y2="528" stroke="#c23531" stroke-width="1"/>
<circle cx="561.2" cy="528" r="4" fill="#fff" stroke="#c23531" stroke-width="1"/>
<text x="572.6" y="531" font-size="8" fill="#444">赵公河节制闸(高家堰镇)</text>
<line x1="664.8" y1="528" x2="679.8" y2="528" stroke="#2f4554" stroke-width="1"/>
<circle cx="672.3" cy="528" r="4" fill="#fff" stroke="#2f4554" stroke-width="1"/>
<text x="683.9" y="531" font-size="8" fill="#444">砂礓河(马头镇)</text>
<line x1="744.5" y1="528" x2="759.5" y2="528" stroke="#61a0a8" stroke-width="1"/>
<circle cx="752.0" cy="528" r="4" fill="#fff" stroke="#61a0a8" stroke-width="1"/>
<text x="763.4" y="531" font-size="8" fill="#444">上官河(南陈集镇)</text>
</svg>
<svg style="position:absolute;left:1257px;top:546px" width="12" height="60">
<rect x="1.2" y="0.5" width="8" height="56.5" rx="4" fill="#616161" stroke="#ececec" stroke-width="0.6"/>
<path d="M2.8 32.5 H7.8 M2.8 34.5 H7.8 M2.8 36.5 H7.8 M2.8 38.5 H7.8 M2.8 40.5 H7.8 M2.8 42.5 H7.8 M2.8 44.5 H7.8 M2.8 46.5 H7.8 M2.8 48.5 H7.8 M2.8 50.5 H7.8 M2.8 52.5 H7.8 M3.5 54.5 H7.2" stroke="#3ed05c" stroke-width="1"/>
</svg>
</body></html>
